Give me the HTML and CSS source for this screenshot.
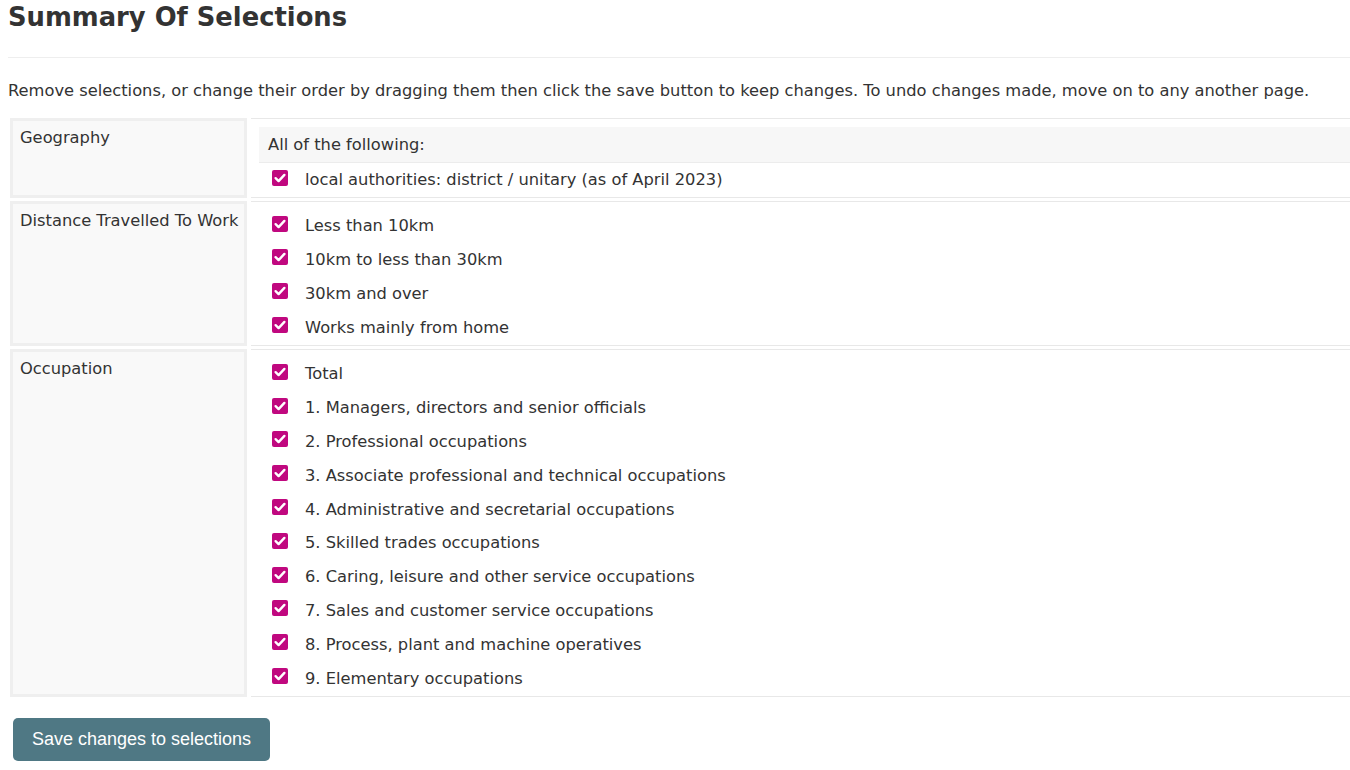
FILE: index.html
```html
<!DOCTYPE html>
<html>
<head>
<meta charset="utf-8">
<title>Summary Of Selections</title>
<link rel="stylesheet" href="styles.css">
</head>
<body>
<div class="page">
  <h1 class="title">Summary Of Selections</h1>
  <hr class="rule">
  <p class="intro">Remove selections, or change their order by dragging them then click the save button to keep changes. To undo changes made, move on to any another page.</p>
  <div class="groups">
    <div class="group">
      <div class="group-name">Geography</div>
      <div class="group-items group-items-geo">
        <div class="group-head">All of the following:</div>
        <div class="item"><span class="check"><svg viewBox="0 0 16 16"><path d="M3.6 8.2 L6.6 11.1 L12.4 4.9" /></svg></span><span class="label">local authorities: district / unitary (as of April 2023)</span></div>
      </div>
    </div>
    <div class="group">
      <div class="group-name">Distance Travelled To Work</div>
      <div class="group-items">
        <div class="item"><span class="check"><svg viewBox="0 0 16 16"><path d="M3.6 8.2 L6.6 11.1 L12.4 4.9" /></svg></span><span class="label">Less than 10km</span></div>
        <div class="item"><span class="check"><svg viewBox="0 0 16 16"><path d="M3.6 8.2 L6.6 11.1 L12.4 4.9" /></svg></span><span class="label">10km to less than 30km</span></div>
        <div class="item"><span class="check"><svg viewBox="0 0 16 16"><path d="M3.6 8.2 L6.6 11.1 L12.4 4.9" /></svg></span><span class="label">30km and over</span></div>
        <div class="item"><span class="check"><svg viewBox="0 0 16 16"><path d="M3.6 8.2 L6.6 11.1 L12.4 4.9" /></svg></span><span class="label">Works mainly from home</span></div>
      </div>
    </div>
    <div class="group">
      <div class="group-name">Occupation</div>
      <div class="group-items">
        <div class="item"><span class="check"><svg viewBox="0 0 16 16"><path d="M3.6 8.2 L6.6 11.1 L12.4 4.9" /></svg></span><span class="label">Total</span></div>
        <div class="item"><span class="check"><svg viewBox="0 0 16 16"><path d="M3.6 8.2 L6.6 11.1 L12.4 4.9" /></svg></span><span class="label">1. Managers, directors and senior officials</span></div>
        <div class="item"><span class="check"><svg viewBox="0 0 16 16"><path d="M3.6 8.2 L6.6 11.1 L12.4 4.9" /></svg></span><span class="label">2. Professional occupations</span></div>
        <div class="item"><span class="check"><svg viewBox="0 0 16 16"><path d="M3.6 8.2 L6.6 11.1 L12.4 4.9" /></svg></span><span class="label">3. Associate professional and technical occupations</span></div>
        <div class="item"><span class="check"><svg viewBox="0 0 16 16"><path d="M3.6 8.2 L6.6 11.1 L12.4 4.9" /></svg></span><span class="label">4. Administrative and secretarial occupations</span></div>
        <div class="item"><span class="check"><svg viewBox="0 0 16 16"><path d="M3.6 8.2 L6.6 11.1 L12.4 4.9" /></svg></span><span class="label">5. Skilled trades occupations</span></div>
        <div class="item"><span class="check"><svg viewBox="0 0 16 16"><path d="M3.6 8.2 L6.6 11.1 L12.4 4.9" /></svg></span><span class="label">6. Caring, leisure and other service occupations</span></div>
        <div class="item"><span class="check"><svg viewBox="0 0 16 16"><path d="M3.6 8.2 L6.6 11.1 L12.4 4.9" /></svg></span><span class="label">7. Sales and customer service occupations</span></div>
        <div class="item"><span class="check"><svg viewBox="0 0 16 16"><path d="M3.6 8.2 L6.6 11.1 L12.4 4.9" /></svg></span><span class="label">8. Process, plant and machine operatives</span></div>
        <div class="item"><span class="check"><svg viewBox="0 0 16 16"><path d="M3.6 8.2 L6.6 11.1 L12.4 4.9" /></svg></span><span class="label">9. Elementary occupations</span></div>
      </div>
    </div>
  </div>
  <button class="save" type="button">Save changes to selections</button>
</div>
</body>
</html>
```

FILE: styles.css
```css
html, body {
  margin: 0;
  padding: 0;
  background: #ffffff;
}

body {
  font-family: "DejaVu Sans", Verdana, sans-serif;
  color: #333333;
  overflow: hidden;
}

.page {
  padding: 0 0 0 8px;
}

.title {
  margin: 0;
  padding-top: 1px;
  font-size: 25.8px;
  line-height: 32px;
  font-weight: bold;
  color: #333333;
}

.rule {
  margin: 24px 0 0 0;
  border: 0;
  border-top: 1px solid #eeeeee;
  height: 0;
}

.intro {
  margin: 23px 0 0 0;
  font-size: 16.3px;
  line-height: 20px;
  white-space: nowrap;
}

.groups {
  margin-top: 17px;
  margin-left: 2px;
  display: flex;
  flex-direction: column;
  gap: 3px;
}

.group {
  display: flex;
  gap: 4px;
}

.group-name {
  flex: 0 0 237px;
  box-sizing: border-box;
  border: 3px solid #efefef;
  background: #f9f9f9;
  padding: 7px 2px 7px 7px;
  font-size: 16.3px;
  line-height: 20px;
  white-space: nowrap;
}

.group-items {
  flex: 1;
  border-top: 1px solid #e8e8e8;
  border-bottom: 1px solid #e8e8e8;
  padding: 7px 0 1px 8px;
}

.group-items-geo {
  padding: 8px 0 0 8px;
}

.group-head {
  background: #f7f7f7;
  border-bottom: 1px solid #ececec;
  height: 35px;
  padding-left: 9px;
  display: flex;
  align-items: center;
  font-size: 16.3px;
}

.item {
  height: 33.8px;
  display: flex;
  align-items: center;
  padding-left: 13px;
  font-size: 16.3px;
}

.check {
  width: 16px;
  height: 16px;
  border-radius: 2px;
  background: #c0087f;
  margin-right: 17px;
  margin-top: -4px;
  display: flex;
  flex: 0 0 16px;
}

.check svg {
  width: 16px;
  height: 16px;
}

.check path {
  fill: none;
  stroke: #ffffff;
  stroke-width: 2.4;
  stroke-linecap: round;
  stroke-linejoin: round;
}

.save {
  margin: 21px 0 0 5px;
  width: 257px;
  height: 43px;
  border: 0;
  border-radius: 5px;
  background: #4f7884;
  color: #ffffff;
  font-family: "Liberation Sans", Arial, sans-serif;
  font-size: 18px;
  padding: 0;
  cursor: pointer;
}
```
